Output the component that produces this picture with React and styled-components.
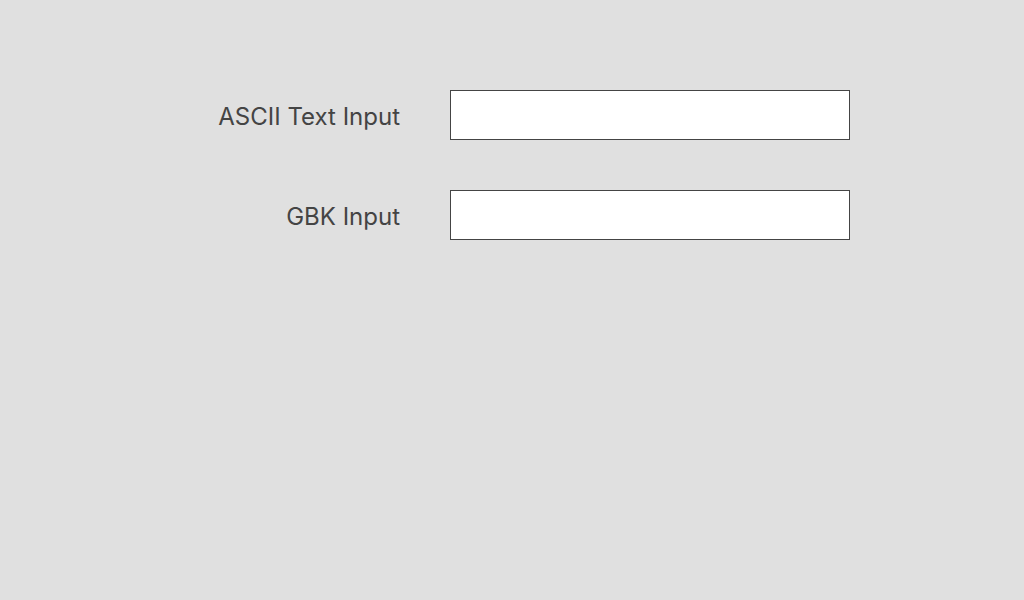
import React from 'react';
import styled, { createGlobalStyle } from 'styled-components';

const GlobalStyle = createGlobalStyle`
  html, body {
    margin: 0;
    padding: 0;
    background: #e0e0e0;
    font-family: Inter, "Noto Sans", sans-serif;
  }
`;

const Form = styled.div`
  display: grid;
  grid-template-columns: 400px 400px;
  grid-auto-rows: 50px;
  column-gap: 50px;
  row-gap: 50px;
  padding-top: 90px;
`;

const Label = styled.label`
  text-align: right;
  font-size: 24px;
  line-height: 46px;
  padding-top: 4px;
  color: #444;
`;

const TextInput = styled.input`
  box-sizing: border-box;
  width: 400px;
  height: 50px;
  margin: 0;
  border: 1px solid #444;
  border-radius: 0;
  background: white;
  font-size: 20px;
  font-family: inherit;
  padding: 0 10px;
  outline: none;
`;

const App = () => {
  return (
    <>
      <GlobalStyle />
      <Form>
        <Label htmlFor="ascii">ASCII Text Input</Label>
        <TextInput id="ascii" type="text" />
        <Label htmlFor="gbk">GBK Input</Label>
        <TextInput id="gbk" type="text" />
      </Form>
    </>
  );
};

export default App;
